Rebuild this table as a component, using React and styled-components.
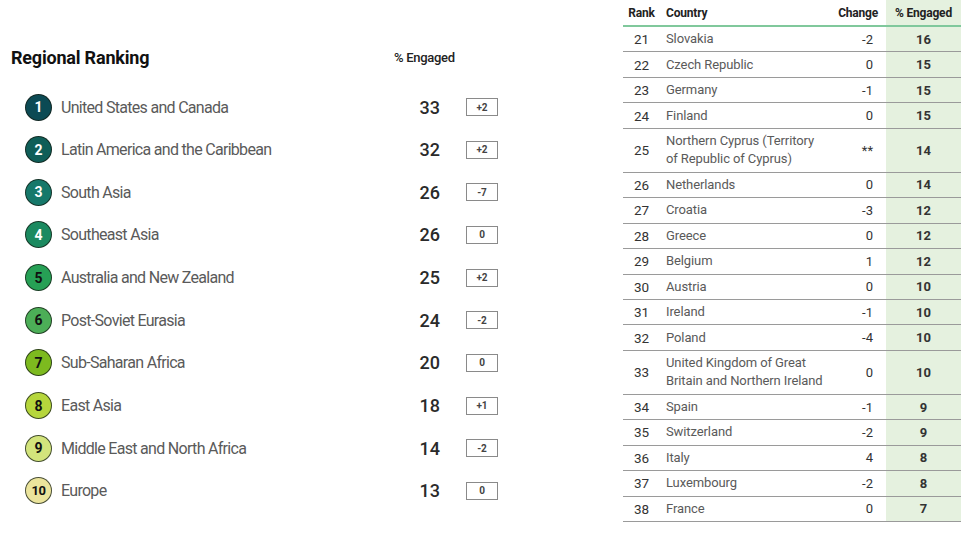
import React from 'react';
import styled, { createGlobalStyle } from 'styled-components';

const GlobalStyle = createGlobalStyle`
    body {
        margin: 0;
        background: #ffffff;
        font-family: Roboto, "Liberation Sans", sans-serif;
    }
`;

const regions = [
    { name: "United States and Canada", engaged: 33, change: "+2", color: "#0c4a54", dark: true },
    { name: "Latin America and the Caribbean", engaged: 32, change: "+2", color: "#0f5e58", dark: true },
    { name: "South Asia", engaged: 26, change: "-7", color: "#16786a", dark: true },
    { name: "Southeast Asia", engaged: 26, change: "0", color: "#1b8a60", dark: true },
    { name: "Australia and New Zealand", engaged: 25, change: "+2", color: "#26a055", dark: false },
    { name: "Post-Soviet Eurasia", engaged: 24, change: "-2", color: "#4cae57", dark: false },
    { name: "Sub-Saharan Africa", engaged: 20, change: "0", color: "#7dba1f", dark: false },
    { name: "East Asia", engaged: 18, change: "+1", color: "#b6d63c", dark: false },
    { name: "Middle East and North Africa", engaged: 14, change: "-2", color: "#d3e47c", dark: false },
    { name: "Europe", engaged: 13, change: "0", color: "#ebe49c", dark: false },
];

const countries = [
    [21, "Slovakia", "-2", 16],
    [22, "Czech Republic", "0", 15],
    [23, "Germany", "-1", 15],
    [24, "Finland", "0", 15],
    [25, "Northern Cyprus (Territory of Republic of Cyprus)", "**", 14, true],
    [26, "Netherlands", "0", 14],
    [27, "Croatia", "-3", 12],
    [28, "Greece", "0", 12],
    [29, "Belgium", "1", 12],
    [30, "Austria", "0", 10],
    [31, "Ireland", "-1", 10],
    [32, "Poland", "-4", 10],
    [33, "United Kingdom of Great Britain and Northern Ireland", "0", 10, true],
    [34, "Spain", "-1", 9],
    [35, "Switzerland", "-2", 9],
    [36, "Italy", "4", 8],
    [37, "Luxembourg", "-2", 8],
    [38, "France", "0", 7],
];

const App = () => {
    return (
        <Page>
            <GlobalStyle />
            <RegionPanel>
                <PanelHeader>
                    <Title>Regional Ranking</Title>
                    <ColumnLabel>% Engaged</ColumnLabel>
                </PanelHeader>
                <RegionList>
                    {regions.map((r, i) => (
                        <RegionRow key={r.name}>
                            <RankDot color={r.color} dark={r.dark} small={i === 9}>{i + 1}</RankDot>
                            <RegionName>{r.name}</RegionName>
                            <RegionValue>{r.engaged}</RegionValue>
                            <ChangeBox>{r.change}</ChangeBox>
                        </RegionRow>
                    ))}
                </RegionList>
            </RegionPanel>

            <CountryTable>
                <HeadRow>
                    <HeadCell align="center">Rank</HeadCell>
                    <HeadCell align="left" pad="6px">Country</HeadCell>
                    <HeadCell align="right" pad="8px">Change</HeadCell>
                    <HeadCell align="center" shaded>% Engaged</HeadCell>
                </HeadRow>
                {countries.map(([rank, name, change, engaged, tall]) => (
                    <BodyRow key={rank} tall={tall}>
                        <RankCell>{rank}</RankCell>
                        <CountryCell>{name}</CountryCell>
                        <ChangeCell>{change}</ChangeCell>
                        <EngagedCell>{engaged}</EngagedCell>
                    </BodyRow>
                ))}
            </CountryTable>
        </Page>
    );
}

export default App;

const Page = styled.div`
    display: flex;
    width: 979px;
    height: 533px;
    overflow: hidden;
`;

const RegionPanel = styled.div`
    width: 623px;
    padding-top: 42px;
    box-sizing: border-box;
`;

const PanelHeader = styled.div`
    display: grid;
    grid-template-columns: 394px auto;
    align-items: center;
    height: 30px;
`;

const Title = styled.div`
    padding-left: 11px;
    font-size: 18px;
    font-weight: 700;
    color: #111;
    letter-spacing: -0.2px;
`;

const ColumnLabel = styled.div`
    font-size: 13px;
    font-weight: 500;
    color: #222;
    letter-spacing: -0.3px;
`;

const RegionList = styled.div`
    margin-top: 13.7px;
    padding-left: 25px;
`;

const RegionRow = styled.div`
    display: grid;
    grid-template-columns: 27px 348px 40px 58px;
    align-items: center;
    height: 42.67px;
`;

const RankDot = styled.div`
    width: 27px;
    height: 27px;
    box-sizing: border-box;
    border-radius: 50%;
    border: 1px solid rgba(20, 30, 20, 0.75);
    background: ${props => props.color};
    color: ${props => props.dark ? "#ffffff" : "#111111"};
    display: flex;
    align-items: center;
    justify-content: center;
    font-size: ${props => props.small ? "13px" : "14px"};
    font-weight: 700;
    letter-spacing: ${props => props.small ? "-0.5px" : "0"};
`;

const RegionName = styled.div`
    padding-left: 9px;
    font-size: 16px;
    color: #5a5a5a;
    letter-spacing: -0.7px;
    white-space: nowrap;
`;

const RegionValue = styled.div`
    text-align: right;
    font-size: 18px;
    font-weight: 500;
    color: #2a2a2a;
`;

const ChangeBox = styled.div`
    justify-self: end;
    width: 32px;
    height: 18px;
    box-sizing: border-box;
    border: 1.5px solid #8a8a8a;
    display: flex;
    align-items: center;
    justify-content: center;
    font-size: 10px;
    font-weight: 700;
    color: #444;
`;

const CountryTable = styled.div`
    width: 338px;
    display: flex;
    flex-direction: column;
`;

const HeadRow = styled.div`
    display: grid;
    grid-template-columns: 37px 1fr 60px 75px;
    height: 27px;
    border-bottom: 2px solid #80c89c;
    box-sizing: border-box;
`;

const HeadCell = styled.div`
    display: flex;
    align-items: center;
    justify-content: ${props => props.align === "center" ? "center" : props.align === "right" ? "flex-end" : "flex-start"};
    padding: 0 ${props => props.align === "right" ? props.pad : "0"} 0 ${props => props.align === "left" ? props.pad : "0"};
    background: ${props => props.shaded ? "#e5f1df" : "transparent"};
    font-size: 12px;
    font-weight: 700;
    color: #222;
    letter-spacing: -0.2px;
    white-space: nowrap;
`;

const BodyRow = styled.div`
    display: grid;
    grid-template-columns: 37px 1fr 60px 75px;
    height: ${props => props.tall ? "44px" : "25.44px"};
    border-bottom: 1.5px solid #9a9a9a;
    box-sizing: border-box;
    font-size: 13px;
    align-items: stretch;
`;

const RankCell = styled.div`
    display: flex;
    align-items: center;
    justify-content: center;
    font-size: 13.5px;
    color: #333;
`;

const CountryCell = styled.div`
    display: flex;
    align-items: center;
    padding-left: 6px;
    padding-right: 2px;
    color: #5a5a5a;
    line-height: 18px;
    letter-spacing: -0.1px;
`;

const ChangeCell = styled.div`
    display: flex;
    align-items: center;
    justify-content: flex-end;
    padding-right: 13px;
    color: #333;
`;

const EngagedCell = styled.div`
    display: flex;
    align-items: center;
    justify-content: center;
    background: #e5f1df;
    font-weight: 700;
    color: #333;
`;
